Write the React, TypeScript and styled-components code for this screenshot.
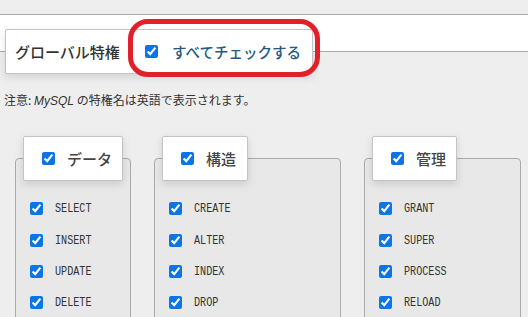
import styled, { createGlobalStyle } from 'styled-components'

const GlobalStyle = createGlobalStyle`
  html, body {
    margin: 0;
    padding: 0;
    background: #eeeeee;
  }
  body {
    font-family: 'Noto Sans CJK JP', 'Noto Sans', sans-serif;
    color: #333333;
  }
`

const Page = styled.div`
  position: relative;
  width: 528px;
  height: 317px;
  overflow: hidden;
`

const TopBand = styled.div`
  margin-top: 14px;
  height: 38px;
  box-sizing: border-box;
  background: #ffffff;
  border-top: 1px solid #aaaaaa;
  border-bottom: 1px solid #aaaaaa;
`

const GlobalLegend = styled.div`
  position: relative;
  margin: -23px 0 0 5px;
  width: 308px;
  height: 45px;
  box-sizing: border-box;
  padding-left: 9px;
  display: flex;
  align-items: center;
  background: #ffffff;
  border: 1px solid #c4c4c4;
  border-radius: 2px;
  box-shadow: 0 3px 8px rgba(0, 0, 0, 0.12);
`

const GlobalTitle = styled.span`
  font-size: 15px;
  font-weight: 500;
  color: #333333;
  width: 130px;
`

const CheckAll = styled.label`
  display: flex;
  align-items: center;
  gap: 14px;
  font-size: 14.5px;
  font-weight: 500;
  color: #235a81;
`

const Box = styled.input.attrs({ type: 'checkbox', readOnly: true })`
  width: 13px;
  height: 13px;
  margin: 0;
  flex: none;
  accent-color: #0b75e6;
`

const Note = styled.p`
  margin: 17px 0 0;
  padding-left: 4px;
  font-size: 12px;
  line-height: 18px;
  color: #333333;

  em {
    font-family: 'Liberation Sans', Arial, sans-serif;
    font-style: italic;
  }
`

const Groups = styled.div`
  display: flex;
  gap: 23px;
  margin-top: 26px;
  padding-left: 15px;
  align-items: flex-start;
`

const Group = styled.div<{ $width: number }>`
  display: flex;
  flex-direction: column;
  align-items: flex-start;
  width: ${(p) => p.$width}px;
`

const Legend = styled.label<{ $width: number }>`
  position: relative;
  z-index: 1;
  margin-left: 8px;
  width: ${(p) => p.$width}px;
  height: 45px;
  box-sizing: border-box;
  padding-left: 18px;
  display: flex;
  align-items: center;
  gap: 12px;
  background: #ffffff;
  border: 1px solid #c4c4c4;
  border-radius: 2px;
  box-shadow: 0 3px 9px rgba(0, 0, 0, 0.13);
  font-size: 15px;
  font-weight: 500;
  color: #444444;
`

const Fieldset = styled.div`
  margin-top: -23px;
  width: 100%;
  box-sizing: border-box;
  padding: 34px 0 60px 14px;
  background: #e8e8e8;
  border: 1px solid #aaaaaa;
  border-radius: 4px;
`

const Row = styled.label`
  display: flex;
  align-items: center;
  gap: 12px;
  height: 31.4px;
`

const Priv = styled.span`
  display: inline-block;
  font-family: 'Liberation Mono', 'DejaVu Sans Mono', monospace;
  font-size: 13.5px;
  color: #333333;
  transform: scaleX(0.75);
  transform-origin: left center;
`

const Annotation = styled.div`
  position: absolute;
  left: 128px;
  top: 19px;
  width: 192px;
  height: 58px;
  box-sizing: border-box;
  border: 5px solid #e2202a;
  border-radius: 20px;
  pointer-events: none;
`

const groups = [
  { title: 'データ', width: 116, legend: 100, privs: ['SELECT', 'INSERT', 'UPDATE', 'DELETE'] },
  { title: '構造', width: 187, legend: 86, privs: ['CREATE', 'ALTER', 'INDEX', 'DROP'] },
  { title: '管理', width: 157, legend: 85, privs: ['GRANT', 'SUPER', 'PROCESS', 'RELOAD'] },
]

export default function App() {
  return (
    <Page>
      <GlobalStyle />
      <TopBand />
      <GlobalLegend>
        <GlobalTitle>グローバル特権</GlobalTitle>
        <CheckAll>
          <Box defaultChecked />
          すべてチェックする
        </CheckAll>
      </GlobalLegend>
      <Note>
        注意: <em>MySQL</em> の特権名は英語で表示されます。
      </Note>
      <Groups>
        {groups.map((g) => (
          <Group key={g.title} $width={g.width}>
            <Legend $width={g.legend}>
              <Box defaultChecked />
              {g.title}
            </Legend>
            <Fieldset>
              {g.privs.map((p) => (
                <Row key={p}>
                  <Box defaultChecked />
                  <Priv>{p}</Priv>
                </Row>
              ))}
            </Fieldset>
          </Group>
        ))}
      </Groups>
      <Annotation />
    </Page>
  )
}
